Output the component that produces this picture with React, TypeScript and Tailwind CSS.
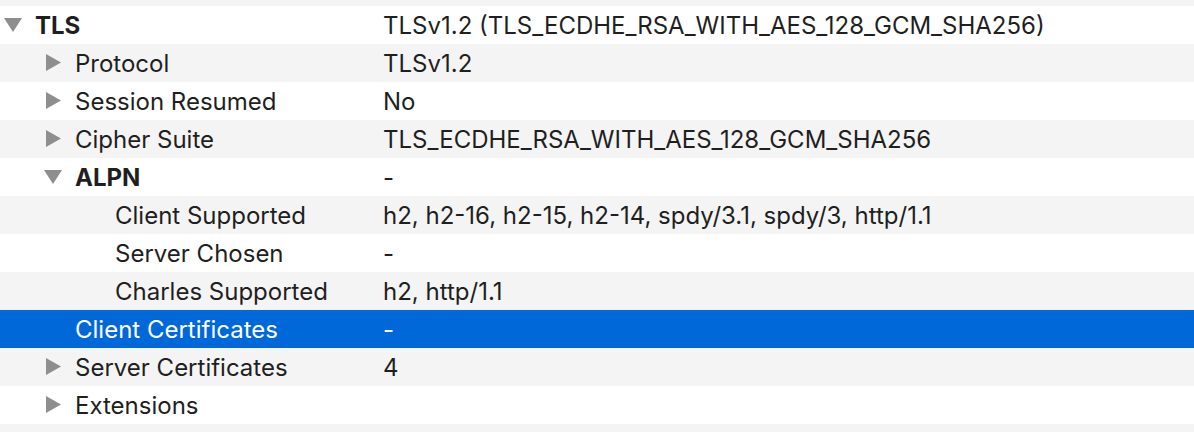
import React from "react";

type Row = {
  label: string;
  value: string;
  level: 0 | 1 | 2;
  toggle?: "open" | "closed";
  bold?: boolean;
  selected?: boolean;
};

const rows: Row[] = [
  { label: "TLS", value: "TLSv1.2 (TLS_ECDHE_RSA_WITH_AES_128_GCM_SHA256)", level: 0, toggle: "open", bold: true },
  { label: "Protocol", value: "TLSv1.2", level: 1, toggle: "closed" },
  { label: "Session Resumed", value: "No", level: 1, toggle: "closed" },
  { label: "Cipher Suite", value: "TLS_ECDHE_RSA_WITH_AES_128_GCM_SHA256", level: 1, toggle: "closed" },
  { label: "ALPN", value: "-", level: 1, toggle: "open", bold: true },
  { label: "Client Supported", value: "h2, h2-16, h2-15, h2-14, spdy/3.1, spdy/3, http/1.1", level: 2 },
  { label: "Server Chosen", value: "-", level: 2 },
  { label: "Charles Supported", value: "h2, http/1.1", level: 2 },
  { label: "Client Certificates", value: "-", level: 1, selected: true },
  { label: "Server Certificates", value: "4", level: 1, toggle: "closed" },
  { label: "Extensions", value: "", level: 1, toggle: "closed" },
];

function Down() {
  return (
    <svg width="18" height="14" viewBox="0 0 18 14" className="block">
      <polygon points="0,0 18,0 9,14" fill="#8e8e8e" />
    </svg>
  );
}

function Right() {
  return (
    <svg width="15" height="17" viewBox="0 0 15 17" className="block">
      <polygon points="0,0 15,8.5 0,17" fill="#8e8e8e" />
    </svg>
  );
}

export default function App() {
  return (
    <div
      className="w-[1194px] h-[432px] overflow-hidden bg-[#f4f4f4] text-[#1f1f1f] text-[24px]"
      style={{ fontFamily: "Inter, 'Liberation Sans', sans-serif" }}
    >
      <div className="h-[6px] bg-[#f4f4f4]" />
      {rows.map((r, i) => {
        const bg = r.selected ? "bg-[#0068d9] text-white" : i % 2 === 0 ? "bg-white" : "bg-[#f4f4f4]";
        const pad = r.level === 0 ? "pl-[35px]" : r.level === 1 ? "pl-[75px]" : "pl-[115px]";
        return (
          <div key={i} className={`relative flex h-[38px] items-center pt-[1px] ${bg}`}>
            {r.toggle && (
              <div
                className={
                  r.level === 0
                    ? "absolute left-[4px] top-[12px]"
                    : r.toggle === "open"
                    ? "absolute left-[44px] top-[12px]"
                    : "absolute left-[46px] top-[10px]"
                }
              >
                {r.toggle === "open" ? <Down /> : <Right />}
              </div>
            )}
            <div className={`w-[383px] shrink-0 ${pad} ${r.bold ? "font-bold" : ""} whitespace-nowrap`}>
              {r.label}
            </div>
            <div className="whitespace-nowrap">{r.value}</div>
          </div>
        );
      })}
      <div className="h-[8px] bg-[#f4f4f4]" />
    </div>
  );
}
